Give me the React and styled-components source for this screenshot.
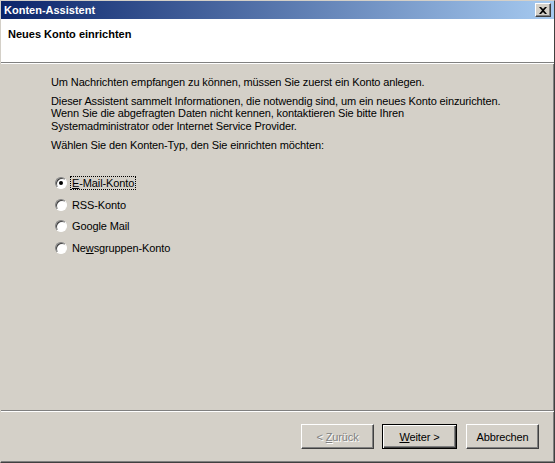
import React, { useState } from "react";
import styled, { createGlobalStyle } from "styled-components";

const GlobalStyle = createGlobalStyle`
  html, body {
    margin: 0;
    padding: 0;
    background: #d4d0c8;
  }
  * { box-sizing: border-box; }
`;

const Window = styled.div`
  width: 555px;
  height: 463px;
  display: flex;
  flex-direction: column;
  background: #d4d0c8;
  border-left: 1px solid #d4d0c8;
  border-top: 1px solid #d4d0c8;
  border-right: 1px solid #404040;
  border-bottom: 1px solid #404040;
  box-shadow: inset -1px -1px 0 #808080;
  font-family: Tahoma, "Liberation Sans", Arial, sans-serif;
  font-size: 11px;
  letter-spacing: -0.12px;
  color: #000;
  overflow: hidden;
`;

const TitleBar = styled.div`
  height: 18px;
  display: flex;
  align-items: center;
  justify-content: space-between;
  padding: 0 3px 0 3px;
  background: linear-gradient(to right, #0a246a, #a6caf0);
  color: #fff;
  font-weight: bold;
  font-size: 11px;
  letter-spacing: 0;
`;

const CloseButton = styled.div`
  width: 16px;
  height: 14px;
  background: #d4d0c8;
  border-top: 1px solid #fff;
  border-left: 1px solid #fff;
  border-right: 1px solid #404040;
  border-bottom: 1px solid #404040;
  box-shadow: inset -1px -1px 0 #808080;
  display: flex;
  align-items: center;
  justify-content: center;
`;

const Header = styled.div`
  height: 43px;
  background: #fff;
  padding: 9px 0 0 7px;
  font-weight: bold;
  letter-spacing: 0;
`;

const Separator = styled.div`
  height: 2px;
  border-top: 1px solid #808080;
  border-bottom: 1px solid #fff;
`;

const Content = styled.div`
  flex: 1;
  padding: 12px 20px 0 50px;
  display: flex;
  flex-direction: column;
`;

const Para = styled.p`
  margin: 0 0 ${(p) => p.$gap || 6}px 0;
  line-height: 12.7px;
`;

const Options = styled.div`
  display: flex;
  flex-direction: column;
  gap: 8.7px;
  margin-top: 19px;
  padding-left: 4px;
`;

const Option = styled.label`
  display: flex;
  align-items: center;
  gap: 3px;
  height: 13px;
  cursor: default;
`;

const RadioCircle = styled.span`
  width: 12px;
  height: 12px;
  border-radius: 50%;
  background: #fff;
  border: 1px solid;
  border-color: #808080 #fff #fff #808080;
  box-shadow: inset 1px 1px 0 #404040;
  display: flex;
  align-items: center;
  justify-content: center;
  &::after {
    content: "";
    width: 4px;
    height: 4px;
    border-radius: 50%;
    background: ${(p) => (p.$checked ? "#000" : "transparent")};
  }
`;

const OptionLabel = styled.span`
  padding: 0 1px;
  border: 1px dotted ${(p) => (p.$focused ? "#000" : "transparent")};
  line-height: 12px;
`;

const Footer = styled.div`
  height: 50px;
  display: flex;
  justify-content: flex-end;
  align-items: flex-start;
  padding: 12px 15px 0 0;
`;

const Button = styled.button`
  width: ${(p) => p.$width || 73}px;
  height: 25px;
  margin-left: ${(p) => p.$gap || 0}px;
  font-family: inherit;
  font-size: 11px;
  letter-spacing: inherit;
  background: #d4d0c8;
  color: ${(p) => (p.disabled ? "#808080" : "#000")};
  text-shadow: ${(p) => (p.disabled ? "1px 1px 0 #fff" : "none")};
  border: 1px solid;
  border-color: ${(p) => (p.$default ? "#000" : "#fff #404040 #404040 #fff")};
  box-shadow: ${(p) =>
    p.$default
      ? "inset 1px 1px 0 #fff, inset -1px -1px 0 #404040, inset -2px -2px 0 #808080"
      : "inset -1px -1px 0 #808080"};
  padding: 0;
`;

const U = styled.span`
  text-decoration: underline;
`;

const options = [
  { label: "E-Mail-Konto", key: 0, u: "E" },
  { label: "RSS-Konto", key: 1 },
  { label: "Google Mail", key: 2 },
  { label: "Newsgruppen-Konto", key: 3, u: "w" },
];

function renderLabel(o) {
  if (!o.u) return o.label;
  const i = o.label.indexOf(o.u);
  return (
    <>
      {o.label.slice(0, i)}
      <U>{o.u}</U>
      {o.label.slice(i + 1)}
    </>
  );
}

export default function App() {
  const [selected, setSelected] = useState(0);

  return (
    <>
      <GlobalStyle />
      <Window>
        <TitleBar>
          <span>Konten-Assistent</span>
          <CloseButton>
            <svg width="8" height="7" viewBox="0 0 8 7">
              <path d="M0 0h2l2 2 2-2h2L5 3.5 8 7H6L4 5 2 7H0l3-3.5z" fill="#000" />
            </svg>
          </CloseButton>
        </TitleBar>
        <Header>Neues Konto einrichten</Header>
        <Separator />
        <Content>
          <Para>Um Nachrichten empfangen zu können, müssen Sie zuerst ein Konto anlegen.</Para>
          <Para>
            Dieser Assistent sammelt Informationen, die notwendig sind, um ein neues Konto einzurichten.
            <br />
            Wenn Sie die abgefragten Daten nicht kennen, kontaktieren Sie bitte Ihren
            <br />
            Systemadministrator oder Internet Service Provider.
          </Para>
          <Para>Wählen Sie den Konten-Typ, den Sie einrichten möchten:</Para>
          <Options>
            {options.map((o) => (
              <Option key={o.key} onClick={() => setSelected(o.key)}>
                <RadioCircle $checked={selected === o.key} />
                <OptionLabel $focused={selected === o.key}>{renderLabel(o)}</OptionLabel>
              </Option>
            ))}
          </Options>
        </Content>
        <Separator />
        <Footer>
          <Button disabled $width={73}>
            &lt; <U>Z</U>urück
          </Button>
          <Button $default $width={75} $gap={8}>
            <U>W</U>eiter &gt;
          </Button>
          <Button $width={73} $gap={9}>
            Abbrechen
          </Button>
        </Footer>
      </Window>
    </>
  );
}
